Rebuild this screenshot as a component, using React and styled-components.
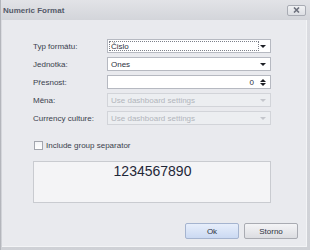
import React from "react";
import styled, { createGlobalStyle } from "styled-components";

const Global = createGlobalStyle`
  html, body { margin: 0; padding: 0; background: #d3d5da; }
  body { font-family: "Liberation Sans", Arial, sans-serif; }
`;

const Window = styled.div`
  width: 310px;
  height: 250px;
  box-sizing: border-box;
  display: flex;
  flex-direction: column;
  background: linear-gradient(#dcdde2, #cfd1d6);
  border-left: 1px solid #b4b6bc;
`;

const TitleBar = styled.div`
  height: 20px;
  flex: none;
  display: flex;
  align-items: center;
  justify-content: space-between;
  padding: 0 4px 0 2px;
  box-sizing: border-box;
  background: linear-gradient(#e2e3e7, #d3d5da);
`;

const Title = styled.div`
  font-size: 8px;
  font-weight: bold;
  color: #555a69;
  margin-top: 1px;
`;

const CloseButton = styled.div`
  width: 19px;
  height: 11px;
  box-sizing: border-box;
  border: 1px solid #a9acb4;
  border-radius: 2px;
  background: linear-gradient(#f1f2f4, #dcdee3);
  display: flex;
  align-items: center;
  justify-content: center;
`;

const Body = styled.div`
  flex: 1;
  margin: 0 3px 3px 1px;
  background: #e9eaee;
  border-right: 1px solid #f3f4f6;
  border-bottom: 1px solid #f3f4f6;
  padding: 19px 8px 0 31px;
  display: flex;
  flex-direction: column;
`;

const Form = styled.div`
  display: grid;
  grid-template-columns: 74px 164px;
  grid-auto-rows: 14px;
  row-gap: 4px;
`;

const Label = styled.div`
  font-size: 8px;
  color: #3a3f4d;
  display: flex;
  align-items: center;
  padding-top: 1px;
`;

const Field = styled.div`
  box-sizing: border-box;
  height: 14px;
  border: 1px solid ${(p) => (p.$disabled ? "#d2d4d9" : "#b6b9c1")};
  background: ${(p) => (p.$disabled ? "#eceef1" : "#ffffff")};
  display: flex;
  align-items: center;
  padding: 1px 3px 1px 1px;
  font-size: 8px;
  color: ${(p) => (p.$disabled ? "#b2b5bc" : "#2d3140")};
`;

const FieldText = styled.div`
  flex: 1;
  height: 10px;
  box-sizing: border-box;
  display: flex;
  align-items: center;
  justify-content: ${(p) => (p.$right ? "flex-end" : "flex-start")};
  padding: 0 ${(p) => (p.$right ? "4px" : "1px")};
  border: 1px ${(p) => (p.$focus ? "dotted #7d808a" : "solid transparent")};
`;

const ArrowBox = styled.div`
  width: 8px;
  display: flex;
  flex-direction: column;
  align-items: center;
  justify-content: center;
  gap: 1px;
`;

const CheckRow = styled.div`
  display: flex;
  align-items: center;
  margin: 15px 0 0 1px;
  height: 10px;
  gap: 3px;
`;

const CheckBox = styled.div`
  width: 9px;
  height: 9px;
  box-sizing: border-box;
  border: 1px solid #a3a6ae;
  background: linear-gradient(#f4f5f7, #ffffff);
`;

const CheckLabel = styled.div`
  font-size: 8px;
  color: #3a3f4d;
`;

const Preview = styled.div`
  margin-top: 11px;
  width: 238px;
  height: 42px;
  box-sizing: border-box;
  border: 1px solid #c9cbd0;
  background: #f4f4f6;
  display: flex;
  justify-content: center;
  font-size: 14px;
  color: #1f2738;
  padding-top: 1px;
  padding-left: 1px;
`;

const Buttons = styled.div`
  margin-top: 20px;
  display: flex;
  justify-content: flex-end;
  gap: 5px;
`;

const Button = styled.div`
  width: 54px;
  height: 16px;
  box-sizing: border-box;
  border: 1px solid ${(p) => (p.$primary ? "#a5b4cf" : "#a9abb2")};
  border-radius: 2px;
  background: ${(p) =>
    p.$primary
      ? "linear-gradient(#e7eefb, #cbd9f2)"
      : "linear-gradient(#f4f4f6, #dcdde1)"};
  display: flex;
  align-items: center;
  justify-content: center;
  font-size: 8px;
  color: #2d3140;
`;

const Down = ({ color = "#1d1f25" }) => (
  <svg width="6" height="3" viewBox="0 0 6 3">
    <polygon points="0,0 6,0 3,3" fill={color} />
  </svg>
);

const Up = ({ color = "#1d1f25" }) => (
  <svg width="6" height="3" viewBox="0 0 6 3">
    <polygon points="0,3 6,3 3,0" fill={color} />
  </svg>
);

const Select = ({ value, focus, disabled }) => (
  <Field $disabled={disabled}>
    <FieldText $focus={focus}>{value}</FieldText>
    <ArrowBox>
      <Down color={disabled ? "#c4c6cc" : "#1d1f25"} />
    </ArrowBox>
  </Field>
);

export default function App() {
  return (
    <>
      <Global />
      <Window>
        <TitleBar>
          <Title>Numeric Format</Title>
          <CloseButton>
            <svg width="7" height="6" viewBox="0 0 7 6">
              <path d="M1 0.5 L6 5.5 M6 0.5 L1 5.5" stroke="#6c707c" strokeWidth="1.6" />
            </svg>
          </CloseButton>
        </TitleBar>
        <Body>
          <Form>
            <Label>Typ formátu:</Label>
            <Select value="Čislo" focus />
            <Label>Jednotka:</Label>
            <Select value="Ones" />
            <Label>Přesnost:</Label>
            <Field>
              <FieldText $right>0</FieldText>
              <ArrowBox>
                <Up />
                <Down />
              </ArrowBox>
            </Field>
            <Label>Měna:</Label>
            <Select value="Use dashboard settings" disabled />
            <Label>Currency culture:</Label>
            <Select value="Use dashboard settings" disabled />
          </Form>
          <CheckRow>
            <CheckBox />
            <CheckLabel>Include group separator</CheckLabel>
          </CheckRow>
          <Preview>1234567890</Preview>
          <Buttons>
            <Button $primary>Ok</Button>
            <Button>Storno</Button>
          </Buttons>
        </Body>
      </Window>
    </>
  );
}
